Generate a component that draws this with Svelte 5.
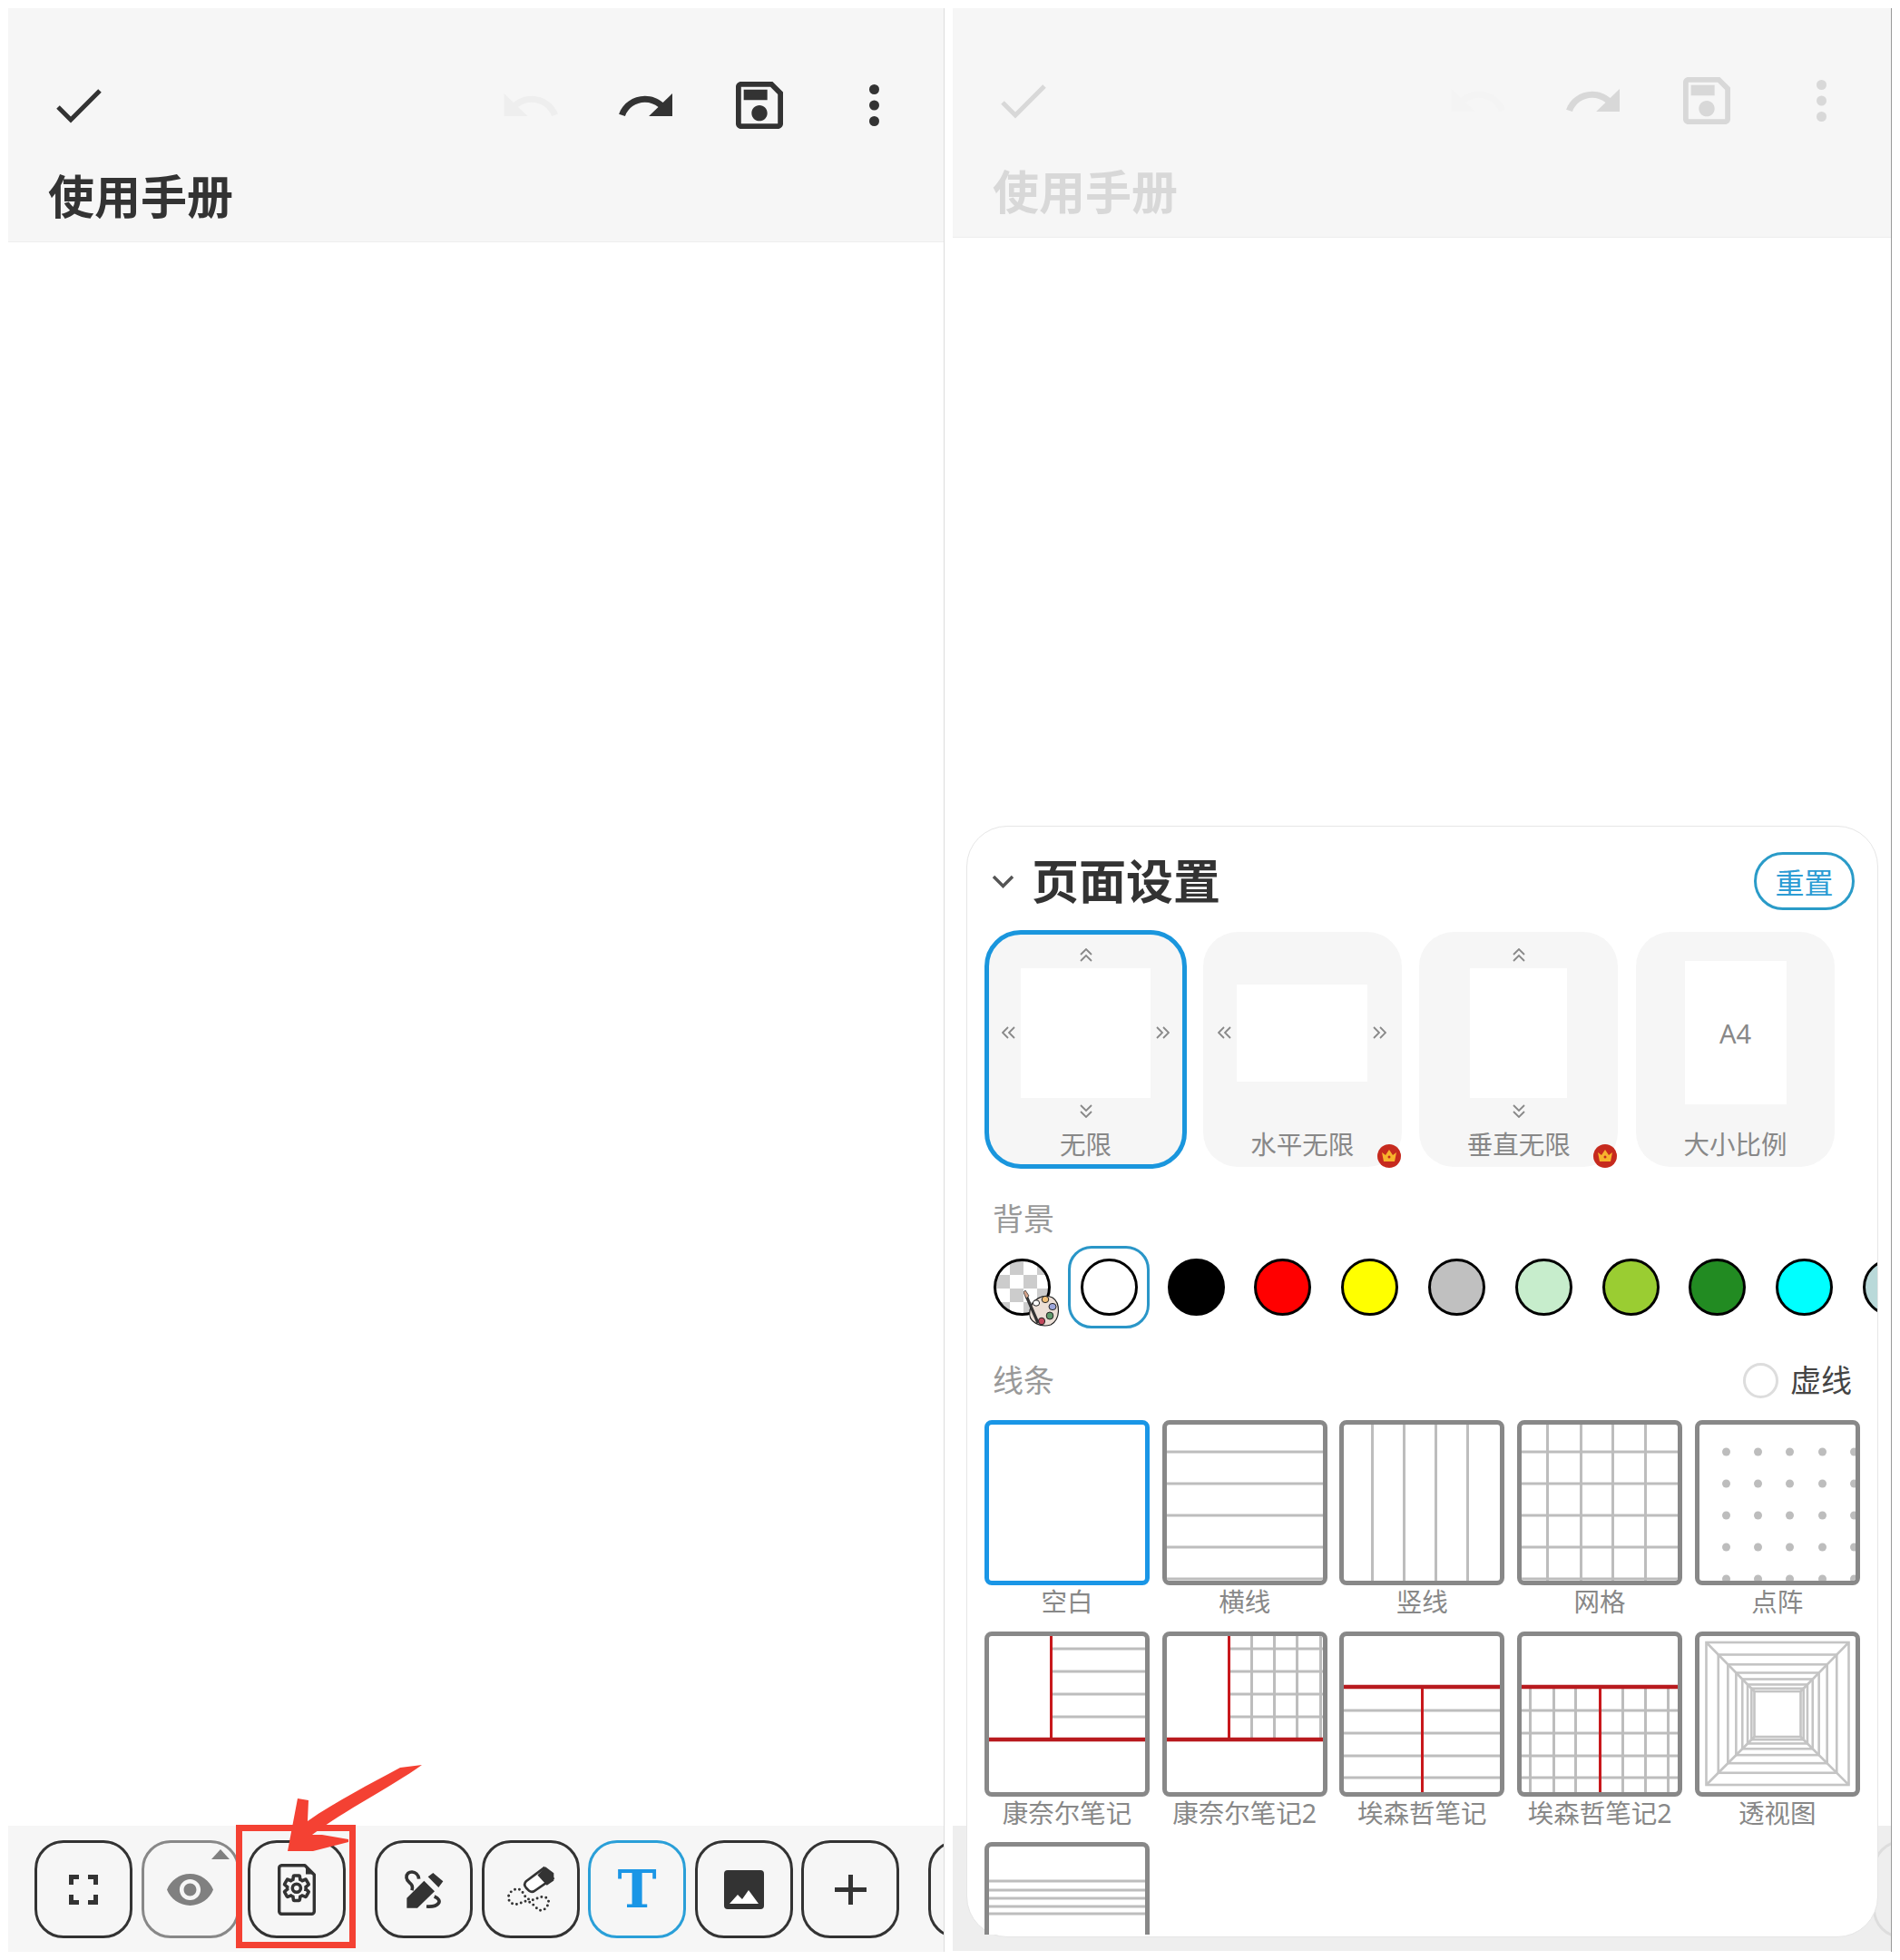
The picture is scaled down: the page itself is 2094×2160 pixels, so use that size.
<script>
  const modes = [
    { name: "无限", w: 143, h: 143, h_arrows: true, v_arrows: true, selected: true },
    { name: "水平无限", w: 144, h: 107, h_arrows: true, crown: true },
    { name: "垂直无限", w: 107, h: 143, v_arrows: true, crown: true },
    { name: "大小比例", w: 112, h: 158, text: "A4" }
  ];

  const swatches = ["#fff", "#000", "#f00", "#ff0", "#c0c0c0", "#c7edcc", "#9acd32", "#228b22", "#0ff", "#b9d9d9"];

  const step = [35, 70, 105, 140, 175];

  // each pattern is drawn in the outer coordinates of the 181x182 thumbnail
  const hl = (ys, x1 = 0, x2 = 181) => ys.map((y) => [x1, y, x2, y]);
  const vl = (xs, y1 = 0, y2 = 182) => xs.map((x) => [x, y1, x, y2]);

  const persp = [0, 0.25, 0.45, 0.62, 0.75, 0.86, 0.94, 1].map((f) => ({
    x: 12 + f * 53,
    y: 12 + f * 54,
    w: 157 - f * 106,
    h: 157 - f * 107
  }));

  const papers = [
    { name: "空白", selected: true },
    { name: "横线", gray: hl(step) },
    { name: "竖线", gray: vl([36, 71, 106, 141]) },
    { name: "网格", gray: [...hl(step), ...vl([33, 70, 105, 141])] },
    { name: "点阵", dots: true },
    {
      name: "康奈尔笔记",
      gray: hl([19, 44, 69, 94], 73),
      red: [[73, 0, 73, 119]],
      redBold: [[0, 119, 181, 119]]
    },
    {
      name: "康奈尔笔记2",
      gray: [...hl([19, 44, 69, 94], 73), ...vl([98, 123, 148, 174], 0, 119)],
      red: [[73, 0, 73, 119]],
      redBold: [[0, 119, 181, 119]]
    },
    {
      name: "埃森哲笔记",
      gray: hl([87, 112, 137, 161]),
      red: [[91, 61, 91, 182]],
      redBold: [[0, 61, 181, 61]]
    },
    {
      name: "埃森哲笔记2",
      gray: [...hl([87, 112, 137, 161]), ...vl([14, 40, 64, 116, 141, 166], 61)],
      red: [[91, 61, 91, 182]],
      redBold: [[0, 61, 181, 61]]
    },
    { name: "透视图", perspective: true },
    { name: "", gray: hl([43, 53, 62, 71, 79]) }
  ];
</script>

{#snippet header(dim)}
  <header class="topbar" class:dim>
    <div class="actions">
      <svg class="check" viewBox="0 0 50 38"><path d="M2 20 L16 34 L48 2" fill="none" stroke="#333" stroke-width="5" /></svg>
      <svg class="undo" viewBox="1.5 7 21 9" preserveAspectRatio="none"><path fill="#eee" d="M12.5 8c-2.65 0-5.05.99-6.9 2.6L2 7v9h9l-3.62-3.62c1.39-1.16 3.16-1.88 5.12-1.88 3.54 0 6.55 2.31 7.6 5.5l2.37-.78C21.08 11.03 17.15 8 12.5 8z" /></svg>
      <svg class="redo" viewBox="1.5 7 20.5 9" preserveAspectRatio="none"><path fill="#333" d="M18.4 10.6C16.55 8.99 14.15 8 11.5 8c-4.65 0-8.58 3.03-9.96 7.22L3.9 16c1.05-3.19 4.05-5.5 7.6-5.5 1.95 0 3.73.72 5.12 1.88L13 16h9V7l-3.6 3.6z" /></svg>
      <svg class="save" viewBox="3 3 18 18"><path fill="#333" d="M17 3H5c-1.11 0-2 .9-2 2v14c0 1.1.89 2 2 2h14c1.1 0 2-.9 2-2V7l-4-4zm2 16H5V5h11.17L19 7.83V19zm-7-7c-1.66 0-3 1.34-3 3s1.34 3 3 3 3-1.34 3-3-1.34-3-3-3zM6 6h9v4H6z" /></svg>
      <svg class="kebab" viewBox="0 0 11 46"><circle cx="5.5" cy="5.5" r="5.5" fill="#333" /><circle cx="5.5" cy="23" r="5.5" fill="#333" /><circle cx="5.5" cy="40.5" r="5.5" fill="#333" /></svg>
    </div>
    <h1>使用手册</h1>
  </header>
{/snippet}

{#snippet chevrons(dir)}
  <svg class="chev chev-{dir}" viewBox="0 0 16 16">
    <path d="M2 7 L8 1 L14 7 M2 14 L8 8 L14 14" fill="none" stroke="#888" stroke-width="1.8" />
  </svg>
{/snippet}

<div class="page">
  <section class="phone left">
    {@render header(false)}
    <div class="canvas"></div>
    <div class="toolbar">
      <div class="group">
        <div class="tool">
          <svg width="32" height="33" viewBox="0 0 32 33"><path d="M11 2.5H2.5V11 M21 2.5H29.5V11 M2.5 22V30.5H11 M29.5 22V30.5H21" fill="none" stroke="#333" stroke-width="5" /></svg>
        </div>
        <div class="tool eye">
          <span class="caret"></span>
          <svg width="51" height="37" viewBox="1 4.5 22 15"><path fill="#808080" fill-rule="evenodd" d="M12 4.5C7 4.5 2.73 7.61 1 12c1.73 4.39 6 7.5 11 7.5s9.27-3.11 11-7.5c-1.73-4.39-6-7.5-11-7.5zM12 17c-2.76 0-5-2.24-5-5s2.24-5 5-5 5 2.24 5 5-2.24 5-5 5zm0-8c-1.66 0-3 1.34-3 3s1.34 3 3 3 3-1.34 3-3-1.34-3-3-3z" /></svg>
        </div>
        <div class="tool">
          <svg width="42" height="57" viewBox="0 0 42 57">
            <path d="M5 1.7H30L40.3 12V52A3 3 0 0 1 37.3 55.3H5A3 3 0 0 1 1.7 52V5A3 3 0 0 1 5 1.7Z" fill="none" stroke="#333" stroke-width="3.4" stroke-linejoin="round" />
            <path d="M31 3L39 11.5H31Z" fill="#333" />
            <g transform="translate(3.7 9.6) scale(1.43)">
              <path fill="none" stroke="#333" stroke-width="2.5" d="M19.14 12.94c.04-.3.06-.61.06-.94 0-.32-.02-.64-.07-.94l2.03-1.58a.49.49 0 0 0 .12-.61l-1.92-3.32a.49.49 0 0 0-.59-.22l-2.39.96c-.5-.38-1.03-.7-1.62-.94l-.36-2.54a.48.48 0 0 0-.48-.41h-3.84c-.24 0-.43.17-.47.41l-.36 2.54c-.59.24-1.13.57-1.62.94l-2.39-.96c-.22-.08-.47 0-.59.22L2.74 8.87c-.12.21-.08.47.12.61l2.03 1.58c-.05.3-.07.62-.07.94s.02.64.07.94l-2.03 1.58a.49.49 0 0 0-.12.61l1.92 3.32c.12.22.37.29.59.22l2.39-.96c.5.38 1.03.7 1.62.94l.36 2.54c.05.24.24.41.48.41h3.84c.24 0 .44-.17.47-.41l.36-2.54c.59-.24 1.13-.56 1.62-.94l2.39.96c.22.08.47 0 .59-.22l1.92-3.32c.12-.22.07-.47-.12-.61l-2.01-1.58zM12 15.2A3.2 3.2 0 1 1 12 8.8a3.2 3.2 0 0 1 0 6.4z" />
            </g>
          </svg>
        </div>
      </div>
      <div class="group">
        <div class="tool">
          <svg width="45" height="45" viewBox="45 60 135 135">
            <path fill="#333" d="M55 188V155L112 98L147 133L90 188Z M125 85L142 72L175 100L160 120Z" />
            <path fill="none" stroke="#333" stroke-width="11" d="M95 92C92 62 52 62 54 88C56 108 80 104 72 130 M146 150C176 162 162 186 120 183" />
          </svg>
        </div>
        <div class="tool">
          <svg width="57" height="53" viewBox="385 50 170 160">
            <path fill="#fff" stroke="#333" stroke-width="8" d="M515 58L456 102Q446 112 456 124L466 134Q476 142 490 130L545 92Z" />
            <path fill="#333" d="M494 82L520 54L548 75V100L525 116Z" />
            <path fill="none" stroke="#333" stroke-width="9" stroke-linecap="round" stroke-dasharray="0 15" d="M398 150C403 130 435 118 445 140C455 160 470 170 490 160C510 148 535 155 530 175C525 195 505 208 490 190C475 175 465 165 445 170C425 185 393 180 398 150Z" />
          </svg>
        </div>
        <div class="tool active"><span class="t">T</span></div>
        <div class="tool">
          <svg width="44" height="43" viewBox="0 0 44 43">
            <rect width="44" height="43" rx="4" fill="#333" />
            <path d="M6 37L15 27L20 32L27 22L38 37Z" fill="#fff" />
          </svg>
        </div>
        <div class="tool">
          <svg width="35" height="33" viewBox="0 0 35 33"><path d="M17.5 0V33 M0 16.5H35" stroke="#333" stroke-width="5" /></svg>
        </div>
      </div>
      <div class="group"><div class="tool"></div></div>
    </div>

    <div class="callout"></div>
    <svg class="arrow" width="160" height="105" viewBox="309 1939 160 105">
      <path fill="#f44133" d="M465 1945L441 1948C410 1965 370 1985 339 2007L340 1984L328 1982L317 2040L345 2040L384 2030L384 2027L355 2022L344 2022C380 1995 430 1970 465 1945Z" />
    </svg>
  </section>

  <section class="phone right">
    {@render header(true)}
    <div class="canvas"></div>
    <div class="toolbar ghost"><div class="tool"></div></div>

    <div class="sheet">
      <div class="sheet-head">
        <svg class="fold" viewBox="0 0 25 15"><path d="M2 2L12.5 12.5L23 2" fill="none" stroke="#555" stroke-width="3.5" /></svg>
        <h2>页面设置</h2>
        <button class="reset">重置</button>
      </div>

      <div class="modes">
        {#each modes as m}
          <div class="mode" class:selected={m.selected}>
            <div class="preview">
              {#if m.v_arrows}{@render chevrons("up")}{/if}
              <div class="mid">
                {#if m.h_arrows}{@render chevrons("left")}{/if}
                <div class="sheet-page" style:width="{m.w}px" style:height="{m.h}px">{m.text ?? ""}</div>
                {#if m.h_arrows}{@render chevrons("right")}{/if}
              </div>
              {#if m.v_arrows}{@render chevrons("down")}{/if}
            </div>
            <div class="mode-name">{m.name}</div>
            {#if m.crown}
              <svg class="crown" viewBox="0 0 26 26">
                <circle cx="13" cy="13" r="13" fill="#c62a1e" />
                <path d="M5 9L9 12L13 6L17 12L21 9L19 19H7Z" fill="#f7b32d" />
                <circle cx="13" cy="14" r="1.5" fill="#c62a1e" />
              </svg>
            {/if}
          </div>
        {/each}
      </div>

      <div class="label bg-label">背景</div>
      <div class="swatches">
        <div class="swatch">
          <span class="dot checker"></span>
          <svg class="palette" width="42" height="42" viewBox="0 0 42 42">
            <path d="M7 22C9 10 22 3 32 8C41 14 41 32 30 38C20 41 4 36 7 22Z" fill="#ecdfd6" stroke="#222" stroke-width="1.2" />
            <ellipse cx="24" cy="10" rx="3.8" ry="3.6" fill="#f2c078" stroke="#222" stroke-width="1" />
            <ellipse cx="32" cy="18" rx="4" ry="3.6" fill="#9da6dc" stroke="#222" stroke-width="1" />
            <ellipse cx="29" cy="28" rx="3.8" ry="4" fill="#5f9a6c" stroke="#222" stroke-width="1" />
            <ellipse cx="20" cy="34" rx="3.6" ry="3.8" fill="#c2485c" stroke="#222" stroke-width="1" />
            <ellipse cx="14" cy="14" rx="3.6" ry="3.2" fill="#fff" stroke="#222" stroke-width="1" />
            <path d="M3 6L16 36" stroke="#333" stroke-width="3.2" />
            <path d="M0 2L2 0L6 6L3 9Z" fill="#d8a58c" stroke="#333" stroke-width=".8" />
          </svg>
        </div>
        {#each swatches as c, i}
          <div class="swatch" class:picked={i === 0}>
            <span class="dot" style:background={c}></span>
          </div>
        {/each}
      </div>

      <div class="line-head">
        <div class="label">线条</div>
        <span class="radio"></span>
        <span class="dash-name">虚线</span>
      </div>

      <div class="paper-scroll">
        <div class="papers">
          {#each papers as p}
            <div class="paper">
              <div class="thumb" class:selected={p.selected}>
                <svg width="100%" height="100%" viewBox="5 5 171 172">
                  {#each p.gray ?? [] as [x1, y1, x2, y2]}
                    <line {x1} {y1} {x2} {y2} stroke="#bdbdbd" stroke-width="3" />
                  {/each}
                  {#if p.dots}
                    {#each step as y}
                      {#each [34, 69, 104, 140, 175] as cx}
                        <circle {cx} cy={y} r="4.5" fill="#bdbdbd" />
                      {/each}
                    {/each}
                  {/if}
                  {#if p.perspective}
                    {#each persp as r}
                      <rect x={r.x} y={r.y} width={r.w} height={r.h} fill="none" stroke="#c4c4c4" stroke-width="2.6" />
                    {/each}
                    <path d="M12 12L65 66 M169 12L116 66 M12 169L65 116 M169 169L116 116" stroke="#c4c4c4" stroke-width="2.6" />
                  {/if}
                  {#each p.red ?? [] as [x1, y1, x2, y2]}
                    <line {x1} {y1} {x2} {y2} stroke="#c8181c" stroke-width="3" />
                  {/each}
                  {#each p.redBold ?? [] as [x1, y1, x2, y2]}
                    <line {x1} {y1} {x2} {y2} stroke="#b81a1e" stroke-width="4.5" />
                  {/each}
                </svg>
              </div>
              <div class="paper-name">{p.name}</div>
            </div>
          {/each}
        </div>
      </div>
    </div>
  </section>
</div>

<style>
  :global(body) {
    margin: 0;
    background: #fff;
  }
  .page {
    display: flex;
    gap: 9px;
    box-sizing: border-box;
    width: 2094px;
    height: 2160px;
    padding: 9px 9px 8px;
    overflow: hidden;
    font-family: "Noto Sans", "Noto Sans CJK SC", sans-serif;
    color: #333;
  }
  .phone {
    position: relative;
    display: flex;
    flex-direction: column;
    box-sizing: border-box;
    height: 2142px;
    background: #fff;
  }
  .phone.left {
    width: 1032px;
    border-right: 1px solid #ddd;
  }
  .phone.right {
    width: 1035px;
    border-right: 1px solid #999;
  }
  .topbar {
    box-sizing: border-box;
    height: 258px;
    padding: 81px 0 0 44px;
    background: #f6f6f6;
    border-bottom: 1px solid #eee;
  }
  .topbar.dim {
    height: 253px;
    padding-top: 76px;
  }
  .topbar.dim > * {
    opacity: 0.15;
  }
  .actions {
    display: flex;
    align-items: center;
    height: 52px;
    padding-left: 9px;
  }
  .check {
    width: 50px;
    height: 38px;
    margin-top: 2px;
  }
  .undo {
    width: 61px;
    height: 25px;
    margin-left: auto;
    margin-top: -2px;
  }
  .redo {
    width: 59px;
    height: 25px;
    margin-left: 67px;
    margin-top: -2px;
  }
  .save {
    width: 52px;
    height: 52px;
    margin-left: 70px;
  }
  .kebab {
    width: 11px;
    height: 46px;
    margin-left: 95px;
    margin-right: 71px;
  }
  h1 {
    margin: 44px 0 0;
    font-size: 51px;
    line-height: 60px;
    font-weight: 700;
    color: #333;
  }
  .canvas {
    flex: 1;
  }
  .toolbar {
    display: flex;
    gap: 32px;
    box-sizing: border-box;
    height: 139px;
    padding: 16px 0 0 29px;
    background: #f6f6f6;
    overflow: hidden;
  }
  .toolbar.ghost {
    height: 138px;
    margin-bottom: 1px;
    padding-left: 1014px;
    background: #eee;
  }
  .toolbar.ghost .tool {
    border-color: #ddd;
  }
  .group {
    display: flex;
    gap: 9.5px;
  }
  .tool {
    position: relative;
    flex: none;
    display: flex;
    align-items: center;
    justify-content: center;
    box-sizing: border-box;
    width: 108px;
    height: 108px;
    border: 3px solid #333;
    border-radius: 32px;
  }
  .tool.eye {
    border-color: #888;
  }
  .tool.active {
    border-color: #2a9fd8;
  }
  .caret {
    position: absolute;
    top: 7px;
    right: 8px;
    width: 0;
    height: 0;
    border-left: 10px solid transparent;
    border-right: 10px solid transparent;
    border-bottom: 11px solid #808080;
  }
  .t {
    font-family: "DejaVu Serif", serif;
    font-weight: 700;
    font-size: 58px;
    line-height: 1;
    color: #1a96e6;
  }
  .callout {
    position: absolute;
    left: 251px;
    top: 2002px;
    box-sizing: border-box;
    width: 132px;
    height: 136px;
    border: 7px solid #f44133;
  }
  .arrow {
    position: absolute;
    left: 300px;
    top: 1930px;
  }

  .sheet {
    position: absolute;
    left: 15px;
    top: 901px;
    box-sizing: border-box;
    display: flex;
    flex-direction: column;
    width: 1005px;
    height: 1225px;
    padding-bottom: 2px;
    background: #fff;
    border: 1px solid #e6e6e6;
    border-radius: 45px;
  }
  .sheet-head {
    display: flex;
    align-items: center;
    height: 64px;
    margin-top: 28px;
    padding: 0 25px 0 27px;
  }
  .fold {
    width: 25px;
    height: 15px;
  }
  h2 {
    margin: 0 0 0 19px;
    font-size: 52px;
    font-weight: 700;
    line-height: 64px;
    color: #333;
  }
  .reset {
    box-sizing: border-box;
    width: 111px;
    height: 64px;
    margin-left: auto;
    padding: 0;
    background: #fff;
    border: 3px solid #2a9bc8;
    border-radius: 32px;
    font: inherit;
    font-size: 32px;
    color: #2c9cd4;
  }
  .modes {
    display: flex;
    gap: 15.7px;
    margin-top: 22px;
    padding-left: 19px;
  }
  .mode {
    position: relative;
    box-sizing: border-box;
    display: flex;
    flex-direction: column;
    align-items: center;
    flex: none;
    width: 223px;
    height: 263px;
    padding-top: 3px;
    background: #f6f6f6;
    background-clip: padding-box;
    border: 2px solid transparent;
    border-radius: 40px;
  }
  .mode.selected {
    padding-top: 0;
    border: 5px solid #1a96dd;
  }
  .preview {
    flex: none;
    display: flex;
    flex-direction: column;
    align-items: center;
    justify-content: center;
    gap: 6px;
    height: 216px;
  }
  .mid {
    display: flex;
    align-items: center;
    gap: 5px;
  }
  .sheet-page {
    flex: none;
    display: flex;
    align-items: center;
    justify-content: center;
    background: #fff;
    font-size: 29px;
    line-height: 1;
    color: #888;
  }
  .chev {
    flex: none;
    width: 16px;
    height: 16px;
  }
  .chev-down {
    transform: rotate(180deg);
  }
  .chev-left {
    transform: rotate(-90deg);
  }
  .chev-right {
    transform: rotate(90deg);
  }
  .mode-name {
    font-size: 28.5px;
    line-height: 36px;
    margin-top: -3px;
    color: #888;
  }
  .crown {
    position: absolute;
    right: 1px;
    bottom: -1px;
    width: 26px;
    height: 26px;
  }
  .label {
    font-size: 34px;
    line-height: 40px;
    color: #999;
  }
  .bg-label {
    margin: 35px 0 0 28px;
  }
  .swatches {
    display: flex;
    gap: 5.8px;
    margin-top: 10px;
    padding-left: 15.5px;
    overflow: hidden;
  }
  .swatch {
    position: relative;
    flex: none;
    box-sizing: border-box;
    display: flex;
    align-items: center;
    justify-content: center;
    width: 90px;
    height: 91px;
    border: 3px solid transparent;
    border-radius: 26px;
  }
  .swatch.picked {
    border-color: #2a96c8;
  }
  .dot {
    flex: none;
    box-sizing: border-box;
    width: 63px;
    height: 63px;
    border: 3.5px solid #000;
    border-radius: 50%;
  }
  .dot.checker {
    background: repeating-conic-gradient(#ccc 0 25%, #fff 0 50%) 0 0 / 30px 30px;
  }
  .palette {
    position: absolute;
    left: 43px;
    top: 46px;
  }
  .line-head {
    display: flex;
    align-items: center;
    height: 40px;
    margin-top: 37px;
    padding: 0 28px 0 28px;
  }
  .radio {
    box-sizing: border-box;
    width: 39px;
    height: 39px;
    margin-left: auto;
    border: 3px solid #ddd;
    border-radius: 50%;
  }
  .dash-name {
    margin-left: 13px;
    font-size: 34px;
    line-height: 40px;
    color: #444;
  }
  .paper-scroll {
    flex: 1;
    min-height: 0;
    margin-top: 24px;
    overflow: hidden;
  }
  .papers {
    display: grid;
    grid-template-columns: repeat(5, 182px);
    column-gap: 13.7px;
    row-gap: 14.5px;
    padding-left: 19px;
  }
  .thumb {
    box-sizing: border-box;
    height: 182px;
    background: #fff;
    border: 5px solid #888;
    border-radius: 8px;
    overflow: hidden;
  }
  .thumb.selected {
    border-color: #1a96e6;
  }
  .thumb svg {
    display: block;
  }
  .paper-name {
    height: 36px;
    font-size: 28.5px;
    line-height: 36px;
    text-align: center;
    color: #888;
    white-space: nowrap;
  }
</style>
